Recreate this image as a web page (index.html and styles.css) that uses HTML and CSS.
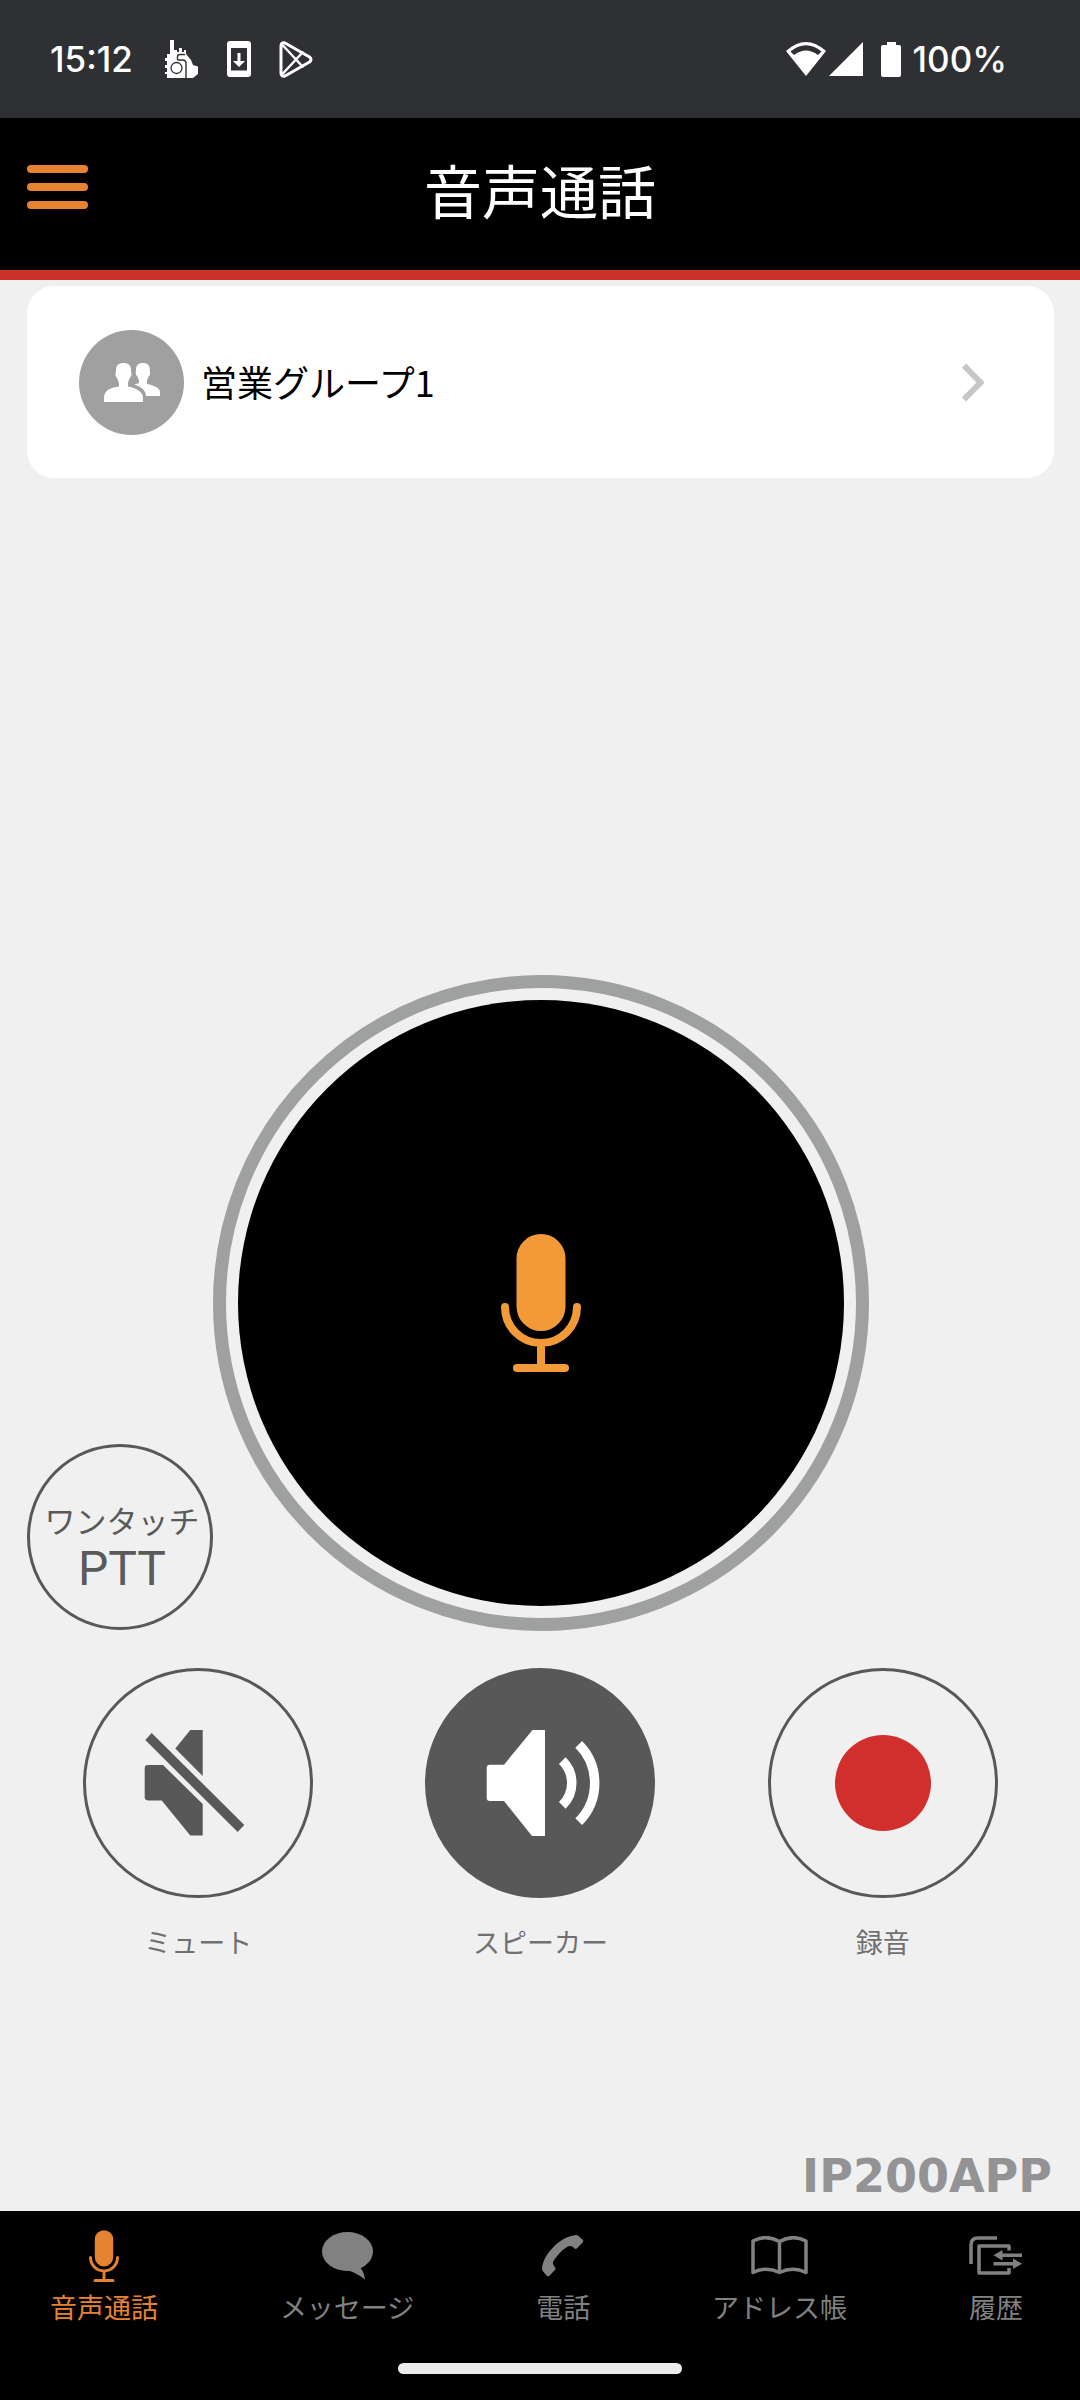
FILE: index.html
```html
<!DOCTYPE html>
<html lang="ja">
<head>
<meta charset="utf-8">
<meta name="viewport" content="width=device-width, initial-scale=1">
<title>音声通話</title>
<link rel="stylesheet" href="styles.css">
</head>
<body>
<div class="status">
  <div class="status-left">
    <span class="clock">15:12</span>
    <svg class="ico-radio" width="34" height="38" viewBox="0 0 34 38" aria-hidden="true">
      <path fill="#fff" d="M5 0h4v10h3v2h2V8h3v4h2v-2h2v4l5 6 2 5 5 1.500V34l-5 4H2v-4H0v-2h2v-4H0v-3h2v-4H0v-3h2v-4h3z"/>
      <circle cx="11.500" cy="28" r="5.500" fill="none" stroke="#2f3033" stroke-width="1.300"/>
      <path fill="none" stroke="#2f3033" stroke-width="1.400" d="M12.500 20v-3q0-2.500 2.500-2.500h5M12.500 20h5q3.500 0 3.500 3.500V38"/>
    </svg>
    <svg class="ico-download" width="24" height="36" viewBox="0 0 24 36" aria-hidden="true">
      <path fill="#fff" fill-rule="evenodd" d="M3 0h18q3 0 3 3v30q0 3-3 3H3q-3 0-3-3V3q0-3 3-3zM4 7v22.500h16V7z"/>
      <path fill="#fff" d="M10.500 12h3v8H18l-6 6-6-6h4.500z"/>
    </svg>
    <svg class="ico-play" width="34" height="37" viewBox="0 0 34 37" aria-hidden="true">
      <g fill="none" stroke="#fff" stroke-width="3" stroke-linejoin="round" stroke-linecap="round">
        <path d="M2 5v27q0 4 4 3l24.500-14q3-2.500 0-5L6 2Q2 1 2 5z"/>
        <path stroke-width="2.500" d="M3 3.500l20.500 22M3 33.500l20.500-22"/>
      </g>
    </svg>
  </div>
  <div class="status-right">
    <svg width="40" height="34" viewBox="0 0 40 34" aria-hidden="true">
      <path fill="#fff" fill-rule="evenodd" d="M0 9Q20-9 40 9L20 34zM4.500 9.500L8 13q12-9 24 0l3.500-3.500Q20-3 4.500 9.500z"/>
    </svg>
    <svg width="34" height="34" viewBox="0 0 34 34" aria-hidden="true"><path fill="#fff" d="M34 0v34H0z"/></svg>
    <svg class="ico-battery" width="20" height="35" viewBox="0 0 20 35" aria-hidden="true"><path fill="#fff" d="M6 0h9v3h3q2 0 2 2v28q0 2-2 2H2q-2 0-2-2V5q0-2 2-2h4z"/></svg>
    <span class="percent">100%</span>
  </div>
</div>

<header class="header">
  <button class="menu" type="button" aria-label="メニュー"><span></span><span></span><span></span></button>
  <h1 class="title">音声通話</h1>
</header>

<main class="main">
  <a class="group" href="#group">
    <span class="avatar">
      <svg width="56" height="39" viewBox="0 0 56 39" aria-hidden="true">
        <path fill="#fff" d="M19.500 0c5 0 7.500 2 7.500 7.500 0 3 1 3 .3 5-.5 1.500-1.500 2-2 3.500-.6 2-1.300 2.500-1.300 5v2.500c7 1.500 12 3.500 14.500 8.500.5 2 .5 4 .5 7H0v-5c1-7 6.500-9.500 15-10.500V21c0-2.500-1-3-1.500-5-.5-1.500-1.500-2-2-3.500s.5-2 .5-5C12 2 14.500 0 19.500 0z"/>
        <path fill="#fff" d="M39 0c4.500 0 6.800 2 6.800 7 0 2 .7 3 .2 4.500-.5 1.300-1.300 1.500-1.800 3-.6 1.500-1.200 2-1.200 4V21c7 1.500 13 4 13 8v4H42c0-6-6-10-12-11.500 2-.5 4-.8 5-1.500v-1.500c0-2-.6-2.500-1.200-4-.5-1.500-1.300-1.700-1.800-3S32 9 32 7c0-5 2.500-7 7-7z"/>
      </svg>
    </span>
    <span class="group-name">営業グループ1</span>
    <svg width="22" height="39" viewBox="0 0 22 39" aria-hidden="true"><path fill="none" stroke="#c6c6c6" stroke-width="6" d="M2 2.500l16.500 17L2 36.500"/></svg>
  </a>

  <div class="stage">
    <button class="one-touch" type="button"><span class="one-touch-kana">ワンタッチ</span><span class="one-touch-ptt">PTT</span></button>
    <button class="talk" type="button" aria-label="送話">
      <svg width="80" height="138" viewBox="0 0 80 138" aria-hidden="true">
        <rect x="15.500" width="49" height="97" rx="24.500" fill="#f29a38"/>
        <path fill="none" stroke="#f29a38" stroke-width="8" stroke-linecap="round" d="M4 73a36 36 0 0 0 72 0M40 109v25M16 134h48"/>
      </svg>
    </button>
  </div>

  <div class="controls">
    <div class="control">
      <button class="round" type="button" aria-labelledby="l-mute">
        <svg viewBox="3 3 224 224" aria-hidden="true">
          <path fill="#585858" d="M107.300 62h12.400v46L92.300 80.600zM65 97h15l39.700 39v31.400h-12.400L78.700 132.400H65q-3.300 0-3.300-3.300v-28.800Q61.700 97 65 97zM68.700 65l92.600 92-6.600 7.100L62.300 72z"/>
        </svg>
      </button>
      <span class="control-label" id="l-mute">ミュート</span>
    </div>
    <div class="control">
      <button class="round round-on" type="button" aria-pressed="true" aria-labelledby="l-speaker">
        <svg viewBox="3 3 224 224" aria-hidden="true">
          <path fill="#fff" d="M65 96.700h14L107.500 62H120v106h-13L79 133H65q-3.300 0-3.300-3.300v-29.700Q61.700 96.700 65 96.700z"/>
          <path fill="none" stroke="#fff" stroke-width="9.500" d="M137.300 92.700a31 31 0 0 1 0 44.600M153.700 76.300a54.800 54.800 0 0 1 0 77.400"/>
        </svg>
      </button>
      <span class="control-label" id="l-speaker">スピーカー</span>
    </div>
    <div class="control">
      <button class="round" type="button" aria-labelledby="l-record"><span class="record-dot"></span></button>
      <span class="control-label" id="l-record">録音</span>
    </div>
  </div>

  <p class="brand">IP200APP</p>
</main>

<footer class="footer">
  <nav class="tabs">
    <a class="tab tab-active" href="#voice">
      <svg width="30" height="52" viewBox="0 0 80 138" aria-hidden="true">
        <rect x="15.500" width="49" height="97" rx="24.500" fill="currentColor"/>
        <path fill="none" stroke="currentColor" stroke-width="8" stroke-linecap="round" d="M4 73a36 36 0 0 0 72 0M40 109v25M16 134h48"/>
      </svg>
      <span>音声通話</span>
    </a>
    <a class="tab" href="#message">
      <svg width="51" height="48" viewBox="0 0 51 48" aria-hidden="true">
        <ellipse cx="25.500" cy="19.500" rx="25.500" ry="19.500" fill="currentColor"/>
        <path fill="currentColor" d="M24 38.500q7 0 19 9-1-8-5-12z"/>
      </svg>
      <span>メッセージ</span>
    </a>
    <a class="tab" href="#phone">
      <svg width="42" height="42" viewBox="0 0 42 42" aria-hidden="true">
        <path fill="currentColor" d="M34 0q2 0 4 2.200l2.800 2.600q1 1.200 0 2.400l-6 6.300q-1.500 1-2.800-.5-2-2.500-5-1.800-3 .5-9 6.500-6 6.500-7 9.500-.7 2 1.500 4.300 1.800 1.800.7 3.200l-6 6.200q-1.200 1-2.400-.2l-2.600-3Q0 36 0 33.500C1 19 19 1 34 0z"/>
      </svg>
      <span>電話</span>
    </a>
    <a class="tab" href="#address">
      <svg width="57" height="39" viewBox="0 0 57 39" aria-hidden="true">
        <path fill="none" stroke="currentColor" stroke-width="3.500" stroke-linejoin="round" d="M28.500 5.500Q15-2 2 5v31.500q13-6.500 26.500 0 13.500-6.500 26.500 0V5Q42-2 28.500 5.500zv31"/>
      </svg>
      <span>アドレス帳</span>
    </a>
    <a class="tab" href="#history">
      <svg width="53" height="39" viewBox="0 0 53 39" aria-hidden="true">
        <g fill="none" stroke="currentColor" stroke-width="3.500">
          <path d="M2 28V9q0-7 7-7h19"/>
          <path stroke-linejoin="round" d="M40 14.500V10H10v27h30v-5"/>
          <path d="M53 19.300H31M24.500 27.700H46"/>
        </g>
        <path fill="currentColor" d="M24.500 19.300l9-5.300v10.600zM53 27.700l-9-5.300V33z"/>
      </svg>
      <span>履歴</span>
    </a>
  </nav>
  <div class="home-bar"></div>
</footer>
</body>
</html>
```
FILE: styles.css
```css
* {
  box-sizing: border-box;
}

body {
  margin: 0;
  min-height: 100vh;
  display: flex;
  flex-direction: column;
  background: #f0f0f0;
  color: #000;
  font-family: "Noto Sans CJK JP", sans-serif;
}

button {
  padding: 0;
  border: 0;
  background: none;
  color: inherit;
  font: inherit;
  cursor: pointer;
}

a {
  color: inherit;
  text-decoration: none;
}

svg {
  display: block;
  flex: none;
}

/* System status bar */
.status {
  height: 118px;
  padding: 0 73px 0 50px;
  display: flex;
  align-items: center;
  justify-content: space-between;
  background: #2f3033;
  color: #fff;
  font: 500 35px/40px Inter, sans-serif;
}

.status-left,
.status-right {
  display: flex;
  align-items: center;
}

.clock {
  min-width: 82px;
}

.percent {
  min-width: 92px;
}

.ico-radio {
  margin-left: 32px;
}

.ico-download,
.ico-play {
  margin-left: 28px;
}

.status-right svg + svg {
  margin-left: 3px;
}

.status-right .ico-battery.ico-battery {
  margin: 0 12px 0 18px;
}

/* App header */
.header {
  height: 162px;
  padding: 0 27px 10px;
  display: grid;
  grid-template-columns: 1fr auto 1fr;
  align-items: center;
  background: #000;
  border-bottom: 10px solid #ca312a;
}

.menu {
  width: 61px;
  display: grid;
  gap: 10px;
  margin-bottom: 5px;
}

.menu span {
  height: 8px;
  border-radius: 4px;
  background: #e58332;
}

.title {
  margin: 0;
  color: #fff;
  font-size: 58px;
  font-weight: 400;
  line-height: 80px;
}

/* Call screen */
.main {
  flex: 1;
  display: flex;
  flex-direction: column;
  padding: 6px 26px 11px 27px;
}

.group {
  height: 192px;
  padding: 0 70px 0 52px;
  display: flex;
  align-items: center;
  gap: 17px;
  border-radius: 27px;
  background: #fff;
}

.avatar {
  width: 105px;
  height: 105px;
  display: grid;
  place-items: center;
  border-radius: 50%;
  background: #a0a0a0;
}

.group-name {
  flex: 1;
  padding-bottom: 3px;
  font-size: 36px;
  line-height: 52px;
}

.stage {
  margin-top: auto;
  padding-top: 40px;
  display: grid;
  grid-template-columns: 1fr auto 1fr;
  align-items: end;
}

.one-touch {
  justify-self: start;
  width: 186px;
  height: 186px;
  margin-bottom: 1px;
  padding: 28px 0 0 4px;
  display: flex;
  flex-direction: column;
  align-items: center;
  justify-content: center;
  border: 3px solid #585858;
  border-radius: 50%;
  color: #5a5a5a;
  font-family: Roboto, "Noto Sans CJK JP", sans-serif;
}

.one-touch-kana {
  font-size: 31px;
  line-height: 36px;
}

.one-touch-ptt {
  font-size: 48px;
  line-height: 56px;
}

.talk {
  width: 656px;
  height: 656px;
  display: grid;
  place-items: center;
  border: 13px solid #9fa1a0;
  border-radius: 50%;
  padding: 12px;
  background: #000 content-box;
}

.controls {
  margin-top: 37px;
  display: grid;
  grid-template-columns: repeat(3, 1fr);
}

.control {
  display: flex;
  flex-direction: column;
  align-items: center;
  gap: 24px;
}

.round {
  width: 230px;
  height: 230px;
  display: grid;
  place-items: center;
  border: 3px solid #585858;
  border-radius: 50%;
}

.round svg {
  width: 224px;
  height: 224px;
}

.round-on {
  background: #585858;
}

.record-dot {
  width: 96px;
  height: 96px;
  border-radius: 50%;
  background: #d02f2d;
}

.control-label {
  color: #707070;
  font-size: 27px;
  line-height: 40px;
}

.brand {
  margin: 190px 0 0;
  padding-right: 2px;
  color: #939396;
  font: bold 46px/48px "DejaVu Sans", sans-serif;
  text-align: right;
}

/* Bottom navigation */
.footer {
  height: 189px;
  padding-bottom: 26px;
  display: flex;
  flex-direction: column;
  align-items: center;
  justify-content: space-between;
  background: #000;
}

.tabs {
  width: 100%;
  padding: 18px 57px 0 50px;
  display: flex;
  justify-content: space-between;
}

.tab {
  display: grid;
  grid-template-rows: 53px 50px;
  place-items: center;
  color: #818181;
  font-size: 27px;
  line-height: 40px;
}

.tab-active {
  color: #e58332;
}

.home-bar {
  width: 284px;
  height: 11px;
  border-radius: 6px;
  background: #ebebeb;
}
```
